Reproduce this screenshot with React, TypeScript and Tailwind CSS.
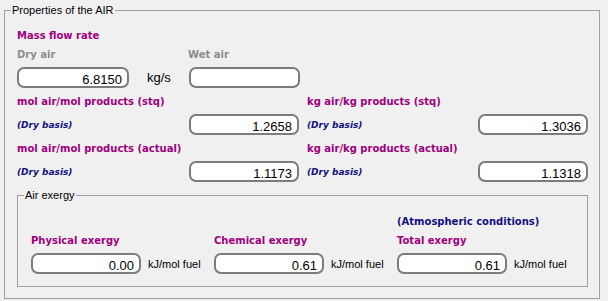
import React from 'react';

const label = "font-['DejaVu_Sans',sans-serif] font-bold text-[10px] leading-[12px] whitespace-nowrap";
const purple = `${label} text-[#9e007e]`;
const navy = "font-['DejaVu_Sans',sans-serif] font-bold italic text-[9px] leading-[12px] text-[#101080] whitespace-nowrap";
const plain = "font-['Liberation_Sans',sans-serif] text-[11px] leading-[14px] text-black whitespace-nowrap";

const ValueBox: React.FC<{ value?: string; width: string }> = ({ value, width }) => (
  <div
    className={`${width} h-[21px] box-border rounded-[7px] border-2 border-[#7c7c7c] bg-white pt-[3px] pr-[5px] text-right font-['Liberation_Sans',sans-serif] text-[13px] leading-[15px] text-black`}
  >
    {value}
  </div>
);

const RatioBlock: React.FC<{ title: string; value: string; boxWidth: string }> = ({ title, value, boxWidth }) => (
  <div className="flex flex-col">
    <div className={purple}>{title}</div>
    <div className="mt-[6px] flex items-center justify-between">
      <span className={navy}>(Dry basis)</span>
      <ValueBox value={value} width={boxWidth} />
    </div>
  </div>
);

const ExergyCol: React.FC<{ title: string; value: string }> = ({ title, value }) => (
  <div className="flex flex-col">
    <div className={purple}>{title}</div>
    <div className="mt-[6px] flex items-center">
      <ValueBox value={value} width="w-[110px]" />
      <span className={`${plain} ml-[7px]`}>kJ/mol fuel</span>
    </div>
  </div>
);

const App: React.FC = () => {
  return (
    <div className="w-[608px] h-[301px] bg-[#f0f0f0] pt-[3px] pl-[4px] overflow-hidden">
      <fieldset className="w-[596px] h-[296px] box-border border border-[#a0a0a0]">
        <legend className={`${plain} ml-[6px] px-[1px]`}>Properties of the AIR</legend>
        <div className="pl-[12px] pt-[13px]">
          <div className={purple}>Mass flow rate</div>
          <div className="mt-[7px] flex">
            <div className={`w-[171px] ${label} text-[#8c8c8c]`}>Dry air</div>
            <div className={`${label} text-[#8c8c8c]`}>Wet air</div>
          </div>
          <div className="mt-[6px] flex items-center">
            <ValueBox value="6.8150" width="w-[112px]" />
            <span className="ml-[18px] w-[42px] font-['Liberation_Sans',sans-serif] text-[13px] leading-[15px] text-black">kg/s</span>
            <ValueBox width="w-[111px]" />
          </div>

          <div className="mt-[8px] grid grid-cols-[282px_281px] gap-x-[8px] gap-y-[8px]">
            <RatioBlock title="mol air/mol products (stq)" value="1.2658" boxWidth="w-[110px]" />
            <RatioBlock title="kg air/kg products (stq)" value="1.3036" boxWidth="w-[110px]" />
            <RatioBlock title="mol air/mol products (actual)" value="1.1173" boxWidth="w-[110px]" />
            <RatioBlock title="kg air/kg products (actual)" value="1.1318" boxWidth="w-[110px]" />
          </div>

          <fieldset className="mt-[6px] w-[571px] h-[99px] box-border border border-[#a0a0a0]">
            <legend className={`${plain} ml-[6px] px-[1px]`}>Air exergy</legend>
            <div className="pl-[13px] pt-[14px]">
              <div className="pl-[366px]">
                <div className={`${label} text-[#101080]`}>(Atmospheric conditions)</div>
              </div>
              <div className="mt-[7px] grid grid-cols-[183px_183px_183px]">
                <ExergyCol title="Physical exergy" value="0.00" />
                <ExergyCol title="Chemical exergy" value="0.61" />
                <ExergyCol title="Total exergy" value="0.61" />
              </div>
            </div>
          </fieldset>
        </div>
      </fieldset>
    </div>
  );
};

export default App;
